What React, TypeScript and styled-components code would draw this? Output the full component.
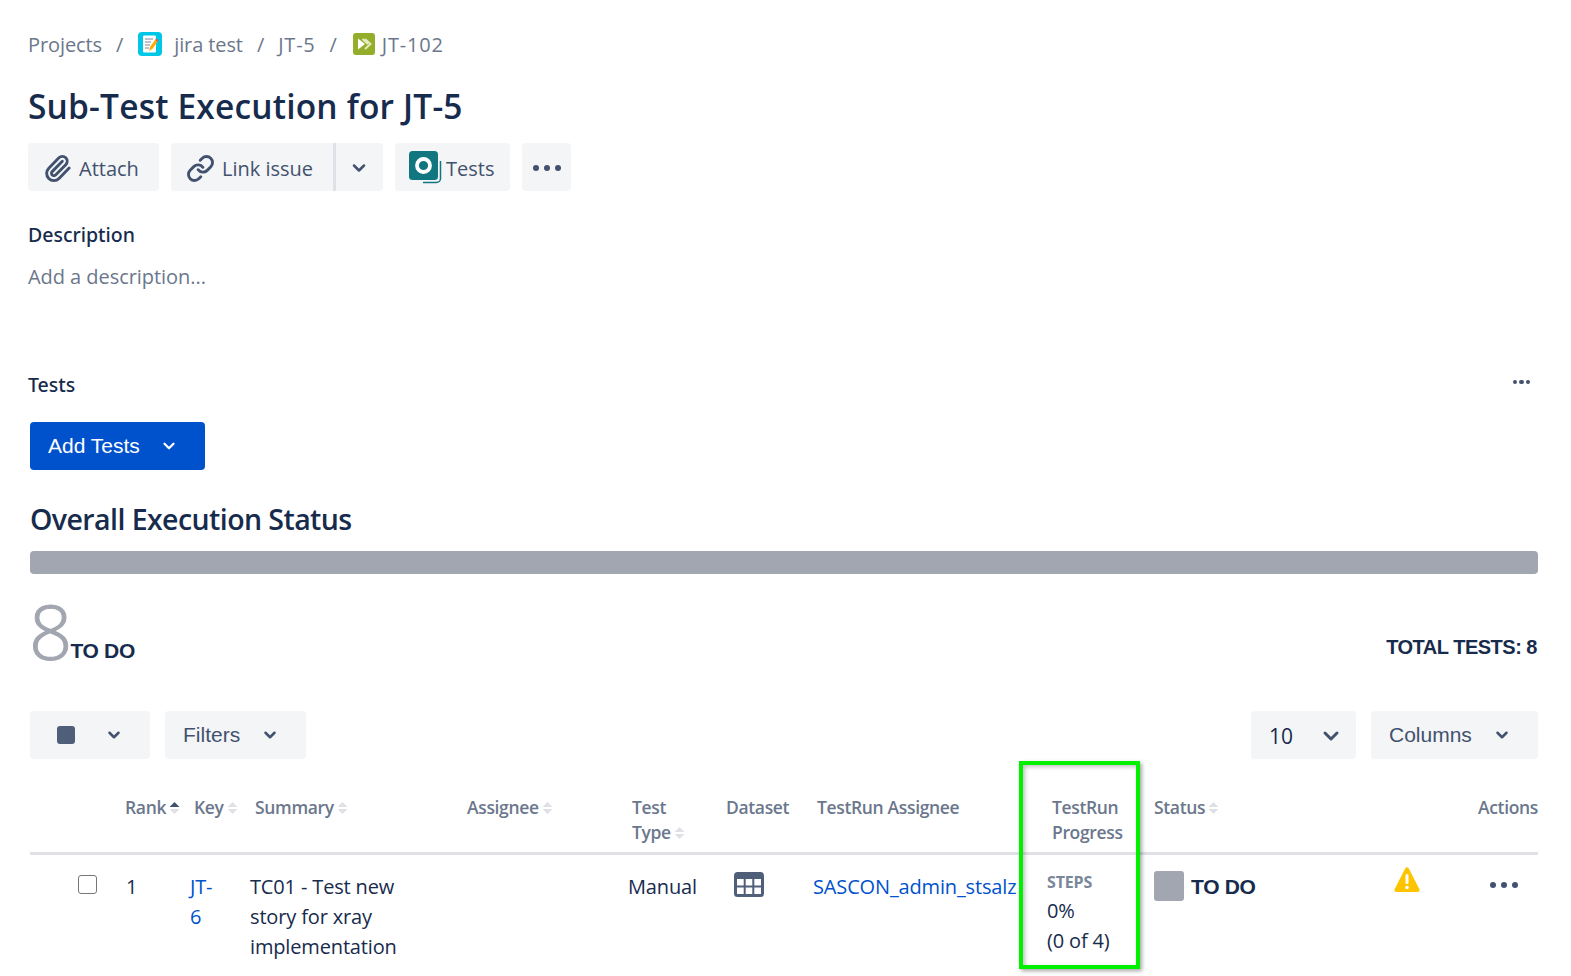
import React from "react";
import styled, { createGlobalStyle } from "styled-components";
import { ChevronDown, Link as LinkIcon, Paperclip } from "lucide-react";

const UI = `"Open Sans", "Noto Sans", "Liberation Sans", sans-serif`;
const ARIAL = `"Liberation Sans", Arial, sans-serif`;

const Global = createGlobalStyle`
  html, body { margin: 0; padding: 0; background: #fff; overflow: hidden; }
  * { box-sizing: border-box; }
`;

const Page = styled.div`
  position: relative;
  width: 1571px;
  height: 976px;
  overflow: hidden;
  padding: 27px 33px 0 28px;
  font-family: ${UI};
  color: #172b4d;
`;

const Breadcrumbs = styled.nav`
  display: flex;
  align-items: center;
  height: 34px;
  font-size: 20px;
  letter-spacing: -0.1px;
  color: #6b778c;
`;
const Sep = styled.span`
  margin: 0 14px;
`;
const IssueKey = styled.span`
  letter-spacing: 0.8px;
`;
const CrumbIcon = styled.svg<{ $after: number }>`
  width: 26px;
  height: 26px;
  margin-right: ${(p) => p.$after}px;
`;
const Title = styled.h1`
  margin: 22px 0 0;
  font-size: 33.5px;
  line-height: 46px;
  font-weight: 600;
  letter-spacing: 0.18px;
  color: #172b4d;
`;
const ActionRow = styled.div`
  display: flex;
  margin-top: 14px;
  height: 48px;
`;
const ActionButton = styled.button<{ $w: number; $gap?: number; $join?: "l" | "r"; $pl?: number }>`
  display: flex;
  align-items: center;
  justify-content: flex-start;
  width: ${(p) => p.$w}px;
  height: 48px;
  margin-right: ${(p) => p.$gap ?? 0}px;
  padding: 2px 0 0 ${(p) => p.$pl ?? 15}px;
  gap: 7px;
  border: none;
  border-left: ${(p) => (p.$join === "r" ? "3px solid #dfe1e6" : "none")};
  border-radius: ${(p) => (p.$join === "l" ? "4px 0 0 4px" : p.$join === "r" ? "0 4px 4px 0" : "4px")};
  background: #f4f5f7;
  color: #42526e;
  font-family: ${UI};
  font-size: 20px;
  white-space: nowrap;
`;
const DotsWrap = styled.span`
  display: flex;
  gap: 5px;
`;
const Dot = styled.i<{ $s: number; $c?: string }>`
  display: block;
  width: ${(p) => p.$s}px;
  height: ${(p) => p.$s}px;
  border-radius: 50%;
  background: ${(p) => p.$c ?? "#42526e"};
`;
const FieldLabel = styled.div`
  margin-top: 30px;
  font-size: 19.5px;
  line-height: 28px;
  font-family: "Noto Sans", sans-serif;
  font-weight: 500;
  color: #172b4d;
`;
const Placeholder = styled.div`
  margin-top: 14px;
  font-size: 20px;
  line-height: 28px;
  letter-spacing: -0.05px;
  color: #6b778c;
`;
const TestsHead = styled.div`
  display: flex;
  justify-content: space-between;
  align-items: center;
  margin-top: 79px;
  height: 28px;
`;
const TestsLabel = styled.span`
  font-size: 19.5px;
  font-family: "Noto Sans", sans-serif;
  font-weight: 500;
`;
const SmallDots = styled(DotsWrap)`
  gap: 2px;
  margin: -4px 8px 0 0;
`;
const Content = styled.div`
  padding-left: 2px;
`;
const PrimaryButton = styled.button`
  display: flex;
  align-items: center;
  width: 175px;
  height: 48px;
  margin-top: 24px;
  padding: 0 0 0 18px;
  gap: 20px;
  border: none;
  border-radius: 4px;
  background: #0052cc;
  color: #fff;
  font-family: ${ARIAL};
  font-size: 21px;
`;
const SectionTitle = styled.h2`
  margin: 29px 0 0;
  height: 40px;
  font-size: 28.5px;
  line-height: 40px;
  font-weight: 600;
  letter-spacing: -0.57px;
`;
const Bar = styled.div`
  height: 23px;
  margin-top: 12px;
  border-radius: 4px;
  background: #a2a6b0;
`;
const Summary = styled.div`
  display: flex;
  justify-content: space-between;
  align-items: flex-end;
  height: 92px;
`;
const BigCount = styled.div`
  display: flex;
  align-items: flex-end;
`;
const BigNum = styled.span`
  font-family: ${UI};
  font-size: 76px;
  line-height: 88px;
  font-weight: 300;
  margin: 0 0 -8.5px -1px;
  color: #a2a6b0;
  -webkit-text-stroke: 1px #a2a6b0;
`;
const Strong = styled.span`
  font-family: ${ARIAL};
  font-weight: 700;
  font-size: 21px;
  letter-spacing: -0.3px;
  color: #172b4d;
`;
const CountLabel = styled(Strong)`
  margin: 0 0 3px -2px;
`;
const Total = styled(Strong)`
  font-size: 20px;
  letter-spacing: -0.5px;
  margin-bottom: 7px;
  padding-right: 1px;
`;
const Toolbar = styled.div`
  display: flex;
  justify-content: space-between;
  margin-top: 45px;
  height: 48px;
`;
const ToolGroup = styled.div`
  display: flex;
  gap: 15px;
`;
const ToolButton = styled.button<{ $w: number; $num?: boolean }>`
  display: flex;
  align-items: center;
  justify-content: space-between;
  width: ${(p) => p.$w}px;
  height: 48px;
  padding: ${(p) => (p.$num ? "2px 13px 0 18px" : "0 27px 0 18px")};
  border: none;
  border-radius: 4px;
  background: #f4f5f7;
  color: ${(p) => (p.$num ? "#172b4d" : "#42526e")};
  font-family: ${(p) => (p.$num ? UI : ARIAL)};
  font-size: 21px;
`;
const Swatch = styled.span<{ $c: string; $s: number; $r: number }>`
  display: block;
  flex: none;
  width: ${(p) => p.$s}px;
  height: ${(p) => p.$s}px;
  border-radius: ${(p) => p.$r}px;
  background: ${(p) => p.$c};
`;
const ToolSwatch = styled(Swatch)`
  margin-left: 9px;
`;
const Table = styled.table`
  width: 100%;
  margin-top: 23px;
  border-collapse: collapse;
  table-layout: fixed;
`;
const Col = styled.col<{ $w: number }>`
  width: ${(p) => p.$w}px;
`;
const Th = styled.th<{ $x?: number; $right?: boolean }>`
  height: 71px;
  padding: 13px 0 7px ${(p) => p.$x ?? 0}px;
  border-bottom: 3px solid #dfe1e6;
  vertical-align: top;
  text-align: ${(p) => (p.$right ? "right" : "left")};
  font-size: 17.5px;
  line-height: 25px;
  letter-spacing: -0.35px;
  font-weight: 600;
  color: #6b778c;
`;
const Nowrap = styled.span`
  white-space: nowrap;
`;
const Td = styled.td<{ $x?: number; $pr?: number }>`
  padding: 17px ${(p) => p.$pr ?? 0}px 0 ${(p) => p.$x ?? 0}px;
  vertical-align: top;
  font-size: 20px;
  line-height: 30px;
  letter-spacing: -0.15px;
  color: #172b4d;
`;
const CheckBox = styled.span`
  display: block;
  width: 19px;
  height: 19px;
  margin: 3px 0 0 48px;
  border: 1.5px solid #767676;
  border-radius: 3px;
  background: #fff;
`;
const Anchor = styled.a`
  color: #0052cc;
  white-space: pre-line;
`;
const NoWrapAnchor = styled(Anchor)`
  white-space: nowrap;
`;
const StepsLabel = styled.div`
  font-size: 16px;
  line-height: 24px;
  margin-top: -2px;
  margin-bottom: 2px;
  font-weight: 700;
  letter-spacing: -0.15px;
  color: #7a869a;
`;
const StatusCell = styled.div`
  display: flex;
  align-items: center;
  gap: 7px;
  margin-top: -2px;
`;
const StatusText = styled(Strong)`
  padding-top: 2px;
`;
const DatasetIcon = styled.svg`
  display: block;
`;
const WarnIcon = styled.svg`
  display: block;
  margin-top: -5px;
`;
const RowDots = styled.div`
  margin-top: 10px;
`;
const Highlight = styled.div`
  position: absolute;
  left: 1019px;
  top: 761px;
  width: 121px;
  height: 208px;
  border: 4px solid #00f000;
  box-shadow: 2px 2px 4px rgba(0, 0, 0, 0.35), inset 2px 2px 4px rgba(0, 0, 0, 0.25);
  pointer-events: none;
`;
const Chevron = styled(ChevronDown)`
  flex: none;
`;
const SortSvg = styled.svg`
  margin-left: 3px;
  vertical-align: -1px;
`;
const TestsIcon = styled.svg`
  flex: none;
  margin: -2px -3px 0 -1px;
`;

function Sort({ active }: { active?: boolean }) {
  return (
    <SortSvg width="11" height="14" viewBox="0 0 11 14">
      <path d="M5.500 1 10.500 6H.5z" fill={active ? "#42526e" : "#dfe1e6"} />
      <path d="M5.500 13 .5 8h10z" fill="#dfe1e6" />
    </SortSvg>
  );
}

function Dots({ size = 6, color }: { size?: number; color?: string }) {
  return (
    <DotsWrap>
      <Dot $s={size} $c={color} />
      <Dot $s={size} $c={color} />
      <Dot $s={size} $c={color} />
    </DotsWrap>
  );
}

export default function App() {
  return (
    <Page>
      <Global />
      <Breadcrumbs>
        <span>Projects</span>
        <Sep>/</Sep>
        <CrumbIcon viewBox="0 0 26 26" $after={11}>
          <rect x="1" y="1" width="24" height="24" rx="4" fill="#00c7e6" />
          <rect x="6" y="4.500" width="13" height="17" rx="1" fill="#fff" />
          <path d="M8 8h8M8 11h6M8 14h5M8 17h4" stroke="#7a869a" strokeWidth="1" />
          <path d="M12 20l1-4 5-7 2.500 1.800-5 7z" fill="#ffab00" />
          <path d="M18 9l1-1.500 2.500 1.800-1 1.500z" fill="#ff5630" />
        </CrumbIcon>
        <span>jira test</span>
        <Sep>/</Sep>
        <IssueKey>JT-5</IssueKey>
        <Sep>/</Sep>
        <CrumbIcon viewBox="0 0 26 26" $after={5}>
          <rect x="2" y="2" width="22" height="22" rx="3" fill="#94ae2c" />
          <path d="M7 7.500l7 5.500-7 5.500z" fill="#fff" />
          <path d="M14 8l5.500 5-5.500 5M11.500 8l5.500 5" fill="none" stroke="#e6edc4" strokeWidth="1.800" />
        </CrumbIcon>
        <IssueKey>JT-102</IssueKey>
      </Breadcrumbs>
      <Title>Sub-Test Execution for JT-5</Title>
      <ActionRow>
        <ActionButton $w={131} $gap={12}>
          <Paperclip size={29} strokeWidth={2.4} color="#42526e" />
          Attach
        </ActionButton>
        <ActionButton $w={162} $join="l">
          <LinkIcon size={29} strokeWidth={2.4} color="#42526e" />
          Link issue
        </ActionButton>
        <ActionButton $w={50} $join="r" $gap={12} $pl={13}>
          <Chevron size={20} strokeWidth={3} color="#42526e" />
        </ActionButton>
        <ActionButton $w={115} $gap={12}>
          <TestsIcon width="33" height="33" viewBox="0 0 33 33">
            <path d="M31.500 10v17.500a4 4 0 0 1-4 4H14" fill="none" stroke="#127681" strokeWidth="1.500" />
            <rect x="0" y="0" width="29" height="29" rx="3.500" fill="#127681" />
            <circle cx="14.500" cy="14.500" r="6.500" fill="none" stroke="#fff" strokeWidth="3.800" />
          </TestsIcon>
          Tests
        </ActionButton>
        <ActionButton $w={49} $pl={11}>
          <Dots />
        </ActionButton>
      </ActionRow>
      <FieldLabel>Description</FieldLabel>
      <Placeholder>Add a description...</Placeholder>
      <TestsHead>
        <TestsLabel>Tests</TestsLabel>
        <SmallDots>
          <Dot $s={4.5} />
          <Dot $s={4.5} />
          <Dot $s={4.5} />
        </SmallDots>
      </TestsHead>
      <Content>
        <PrimaryButton>
          Add Tests
          <Chevron size={18} strokeWidth={3} color="#fff" />
        </PrimaryButton>
        <SectionTitle>Overall Execution Status</SectionTitle>
        <Bar />
        <Summary>
          <BigCount>
            <BigNum>8</BigNum>
            <CountLabel>TO DO</CountLabel>
          </BigCount>
          <Total>TOTAL TESTS: 8</Total>
        </Summary>
        <Toolbar>
          <ToolGroup>
            <ToolButton $w={120}>
              <ToolSwatch $c="#505f79" $s={18} $r={3} />
              <Chevron size={18} strokeWidth={3.4} color="#42526e" />
            </ToolButton>
            <ToolButton $w={141}>
              Filters
              <Chevron size={18} strokeWidth={3.4} color="#42526e" />
            </ToolButton>
          </ToolGroup>
          <ToolGroup>
            <ToolButton $w={105} $num>
              10
              <Chevron size={24} strokeWidth={3} color="#42526e" />
            </ToolButton>
            <ToolButton $w={167}>
              Columns
              <Chevron size={18} strokeWidth={3.4} color="#42526e" />
            </ToolButton>
          </ToolGroup>
        </Toolbar>
        <Table>
          <colgroup>
            <Col $w={90} />
            <Col $w={66} />
            <Col $w={60} />
            <Col $w={216} />
            <Col $w={162} />
            <Col $w={97} />
            <Col $w={88} />
            <Col $w={234} />
            <Col $w={108} />
            <Col $w={235} />
            <Col $w={92} />
            <Col $w={60} />
          </colgroup>
          <thead>
            <tr>
              <Th />
              <Th $x={5}><Nowrap>Rank<Sort active /></Nowrap></Th>
              <Th $x={8}><Nowrap>Key<Sort /></Nowrap></Th>
              <Th $x={9}><Nowrap>Summary<Sort /></Nowrap></Th>
              <Th $x={5}><Nowrap>Assignee<Sort /></Nowrap></Th>
              <Th $x={8}>Test <br /><Nowrap>Type<Sort /></Nowrap></Th>
              <Th $x={5}>Dataset</Th>
              <Th $x={8}>TestRun Assignee</Th>
              <Th $x={9}>TestRun Progress</Th>
              <Th $x={3}><Nowrap>Status<Sort /></Nowrap></Th>
              <Th $right colSpan={2}>Actions</Th>
            </tr>
          </thead>
          <tbody>
            <tr>
              <Td><CheckBox /></Td>
              <Td $x={6}>1</Td>
              <Td $x={4}><Anchor>{"JT-\n6"}</Anchor></Td>
              <Td $x={4} $pr={40}>TC01 - Test new story for xray implementation</Td>
              <Td />
              <Td $x={4}>Manual</Td>
              <Td $x={13}>
                <DatasetIcon width="30" height="25" viewBox="0 0 30 25">
                  <rect width="30" height="25" rx="3.500" fill="#505f79" />
                  <path d="M3 7h6.700v6.500H3zM11.700 7h6.600v6.500h-6.600zM20.300 7H27v6.500h-6.700zM3 15.500h6.700V22H3zM11.700 15.500h6.600V22h-6.600zM20.300 15.500H27V22h-6.700z" fill="#fff" />
                </DatasetIcon>
              </Td>
              <Td $x={4}><NoWrapAnchor>SASCON_admin_stsalz</NoWrapAnchor></Td>
              <Td $x={4}>
                <StepsLabel>STEPS</StepsLabel>
                0%
                <br />
                <Nowrap>(0 of 4)</Nowrap>
              </Td>
              <Td $x={3}>
                <StatusCell>
                  <Swatch $c="#a2a6b0" $s={30} $r={3} />
                  <StatusText>TO DO</StatusText>
                </StatusCell>
              </Td>
              <Td $x={8}>
                <WarnIcon width="26" height="25" viewBox="0 0 26 25">
                  <path d="M11.200 1.500a2 2 0 0 1 3.600 0l10.500 20.500a2 2 0 0 1-1.800 3H2.500a2 2 0 0 1-1.800-3z" fill="#ffc400" />
                  <rect x="11.500" y="7" width="3" height="10" rx="1.500" fill="#fff" />
                  <circle cx="13" cy="20.500" r="1.800" fill="#fff" />
                </WarnIcon>
              </Td>
              <Td $x={12}>
                <RowDots>
                  <Dots />
                </RowDots>
              </Td>
            </tr>
          </tbody>
        </Table>
      </Content>
      <Highlight />
    </Page>
  );
}
